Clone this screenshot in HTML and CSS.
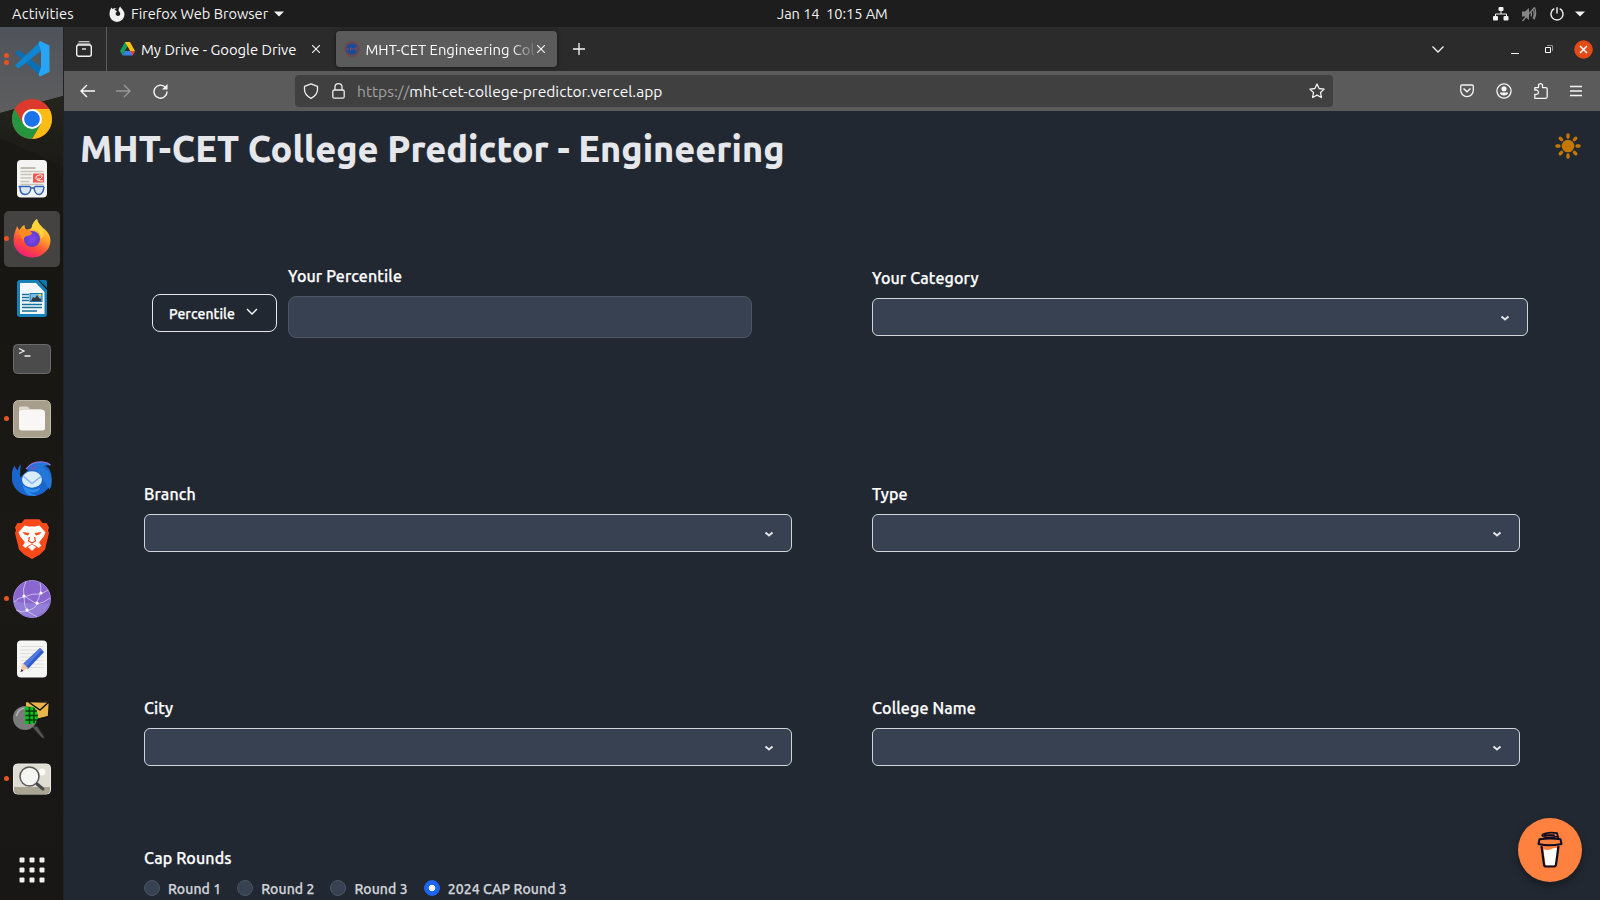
FILE: index.html
```html
<!DOCTYPE html>
<html lang="en">
<head>
<meta charset="utf-8">
<title>MHT-CET Engineering College Predictor</title>
<link rel="stylesheet" href="styles.css">
</head>
<body>
<div class="desktop">
  <header class="topbar">
    <span class="activities">Activities</span>
    <svg class="ff-mono" width="16" height="16" viewBox="0 0 16 16"><path d="M8 2.2C5.500 2.200 5.200 4 6.800 4.600 8.400 5.200 8 6.300 6.700 6.800 6.300 8.600 7.300 9.900 8.900 9.900 10.800 9.900 11.700 8.300 11 6.700 10.700 6 10.200 5.500 9.600 5.200 9.400 3.300 10 1.700 11.200.6 12 2.500 15.500 4.500 15.500 8.600A7.500 7.300 0 0 1 .5 8.600C.5 5.300 1.300 3 2.700 1.500 2.800 2.300 3.200 2.800 3.700 3 4.900 2.300 6.300 1.900 8 2.200Z" fill="#f2f2f2"/></svg>
    <span class="app-name">Firefox Web Browser</span>
    <svg class="caret" width="10" height="6" viewBox="0 0 10 6"><path d="M0 .5h10L5 5.500Z" fill="#f2f2f2"/></svg>
    <span class="clock">Jan 14&nbsp; 10:15 AM</span>
    <div class="tray">
      <svg width="16" height="14" viewBox="0 0 16 14"><g fill="#f2f2f2"><rect x="5.500" y="0" width="5" height="4" rx="1"/><rect x="0" y="9" width="5" height="4.500" rx="1"/><rect x="10.500" y="9" width="5" height="4.500" rx="1"/></g><path d="M8 4v3M2.500 9.500V7h11v2.500" fill="none" stroke="#f2f2f2"/></svg>
      <svg width="16" height="16" viewBox="0 0 16 16"><path d="M1 5.500h3L8 2v12l-4-3.500H1Z" fill="#858585"/><path d="M9.800 5.500q1.500 2.500 0 5M12 4q2.500 4 0 8.500M13.500 1.500q2.500 6-.5 12M1.500 15 13.500 1.500" fill="none" stroke="#858585" stroke-width="1.300"/></svg>
      <svg width="14" height="14" viewBox="0 0 14 14"><path d="M4.300 1.700a6 6 0 1 0 5.400 0M7 .3v6.200" fill="none" stroke="#f2f2f2" stroke-width="1.400"/></svg>
      <svg width="10" height="6" viewBox="0 0 10 6"><path d="M0 .5h10L5 5.500Z" fill="#f2f2f2"/></svg>
    </div>
  </header>
  <div class="workspace">
    <nav class="dock">
      <div class="slot two"><svg viewBox="0 0 40 40"><path d="M3 14 6.500 11 29 28v9.500Z" fill="#0a6fb5"/><path d="M3 26.500 6.500 29.500 29 12V2Z" fill="#0e86d2"/><path d="M28 2 37.500 6.500V33L28 37.500 26.500 36 29 28V12L26.500 4Z" fill="#27a4f2"/></svg></div>
      <div class="slot"><svg viewBox="0 0 40 40"><circle cx="20" cy="20" r="20" fill="#dd3a2e"/><path d="M20 10h17.300A20 20 0 0 1 20 40L28.700 25Z" fill="#fbbc15"/><path d="M2.700 10A20 20 0 0 0 20 40l8.700-15H11.300Z" fill="#25953f"/><circle cx="20" cy="20" r="10" fill="#fff"/><circle cx="20" cy="20" r="7.900" fill="#1a73e8"/></svg></div>
      <div class="slot"><svg viewBox="0 0 40 40"><rect x="5" y="1" width="30" height="37.500" rx="4" fill="#f4f4f3"/><path d="M8.500 9h15" stroke="#b5ad9f" stroke-width="1.600"/><path d="M8.500 12.500h23M8.500 15.500h11M8.500 19h11M8.500 22.500h9M8.500 25.500h23" stroke="#c8c3b8" stroke-width="1.300"/><rect x="21" y="14.500" width="11" height="9" fill="#f4574d"/><path d="M31 22q-6 0-7-2.500t3-3.500 3 2-5 2" fill="none" stroke="#fff"/><path d="M6.500 27.500h11l2 1.500h2l2-1.500h8.500M8 28q0 7.500 5 7.500t6-6.500M22 29q1 6.500 5 6.500t5-7.500" fill="#c8daf0" fill-opacity=".6" stroke="#2c63b2" stroke-width="1.500"/></svg></div>
      <div class="slot active one"><svg viewBox="0 0 40 40"><defs><linearGradient id="fx" x1=".8" y1="0" x2=".3" y2="1"><stop offset="0" stop-color="#fff04a"/><stop offset=".4" stop-color="#ffa32a"/><stop offset=".7" stop-color="#ff4b3c"/><stop offset="1" stop-color="#ec1b7e"/></linearGradient><radialGradient id="fp"><stop offset="0" stop-color="#8148e8"/><stop offset="1" stop-color="#5a3ccf"/></radialGradient></defs><path d="M25 0c1 5 5 7 6 9 3 2 7.500 6 7.500 13A18.500 17 0 0 1 1.500 21C1.500 15 4 11 5 7c1 2 1.500 3 2.500 4 2-3 3.500-4.500 5-5 0 2 1 4 2 5L20 9c0-4 2-7 5-9Z" fill="url(#fx)"/><circle cx="20" cy="20" r="8" fill="url(#fp)"/><path d="M7 11q8-3 13 3 0 2-5 3-4 1-3 5-5-5-5-11Z" fill="#ff8b22"/><path d="M19 11q10-2 10 9 4-4 2-9-5-4-6-11-5 4-6 11Z" fill="#ffd53e"/></svg></div>
      <div class="slot"><svg viewBox="0 0 40 40"><path d="M8 1h18l9 10v24q0 3-3 3H8q-3 0-3-3V4q0-3 3-3Z" fill="#1680b8"/><path d="M27 1h6.500q1.500 0 1.500 1.500V9Z" fill="#0b79b0"/><path d="M8 4h16l8.500 9v22H8Z" fill="#f4f7f9"/><path d="M10 15.500h7M10 18.500h7M10 21.500h7M10 25.500h20M10 28.500h20M10 32h15" stroke="#14709f" stroke-width="1.500"/><rect x="18" y="14.500" width="12" height="8" fill="#78bce2" stroke="#1477aa"/><path d="m19 22 2-4 2 1 2-3 2 3 2 1v2Z" fill="#343a40"/><circle cx="28" cy="16" r="1.200" fill="#ffd51f"/></svg></div>
      <div class="slot"><svg viewBox="0 0 40 40"><rect x="1.500" y="5.500" width="37" height="29" rx="4" fill="#4b4b4b" stroke="#6b6b6b"/><path d="m7 9.500 5 2.500-5 2.500M12.500 17h6" fill="none" stroke="#eee" stroke-width="1.300"/></svg></div>
      <div class="slot one"><svg viewBox="0 0 40 40"><rect x="1.500" y="1.500" width="37" height="37" rx="5" fill="#a79f8c" stroke="#c1baa9"/><path d="M7 9q0-1.500 1.500-1.500h7L18 10h12v6H7Z" fill="#dedad0"/><rect x="7" y="11" width="26" height="20.500" rx="2.500" fill="#f8f7f5"/></svg></div>
      <div class="slot"><svg viewBox="0 -1.500 40 40"><path d="M2.500 5Q-1 10 0 20a20 18.500 0 0 0 39.500 0Q40.500 9 33 5L22 4 8 17Q8 9 9 4 6 6 6 10 3 8 2.500 5Z" fill="#1b66cc"/><path d="M14 9Q20 1 31 1.500q5 .5 7.500 3.500-6-1-8 2 5 1 8 8 3 8-1 14L25 10Z" fill="#2277d8"/><path d="M14 8.500Q20 .5 31 1.500q5 .5 7.500 3" fill="none" stroke="#9a79e8" stroke-width="1.200"/><path d="M17 10q4-5 9-4-3 4-9 4Z" fill="#6a57c8"/><ellipse cx="20" cy="19" rx="10" ry="8.300" fill="#d9ecfb"/><path d="m11.500 16 8.500 7 9-7" fill="none" stroke="#82b7e8" stroke-width="1.400"/><path d="M10.500 24q8 8 18 3-3 7-12 4 3 3 8 4-12 2-14-11Z" fill="#2f8ded"/></svg></div>
      <div class="slot"><svg viewBox="0 0 40 40"><path d="M12.500.3h15l3 3.700h4l2.500 4.500-1 3 1 2.500-4 16.500-5 5-8 4.500-8-4.500-5-5L3 14l1-2.500-1-3L5.500 4h4Z" fill="#fb4a1a"/><path d="m12.500 6.500 4.500 1h6l4.500-1 6 7q-1.500 5-5.500 8.500-2 2 1.500 4.500l-3 2.500q-3-3-6.500-4-3.500 1-6.500 4l-3-2.500q3.500-2.500 1.500-4.500-4-3.500-5.500-8.500Z" fill="#fff"/><path d="m16 28 4-2.500 4 2.500-4 4Z" fill="#fff"/><path d="m10.500 13 7 1-1.500 2.500-3.500-1ZM29.500 13 22.500 14l1.500 2.500 3.500-1Z" fill="#fb4a1a"/><path d="m17.500 18-1 4 3.500 2 3.500-2-1-4" fill="none" stroke="#fb4a1a" stroke-width="1.200"/></svg></div>
      <div class="slot one"><svg viewBox="0 0 40 40"><circle cx="20" cy="20" r="18.500" fill="#8a67cf" stroke="#a186dc"/><path d="M19 38Q1 36 2 21q10 4 18 3 10 2 17 0-3 12-18 14Z" fill="#9c8ddd" opacity=".6"/><path d="M2 23q5-5 10-5 8-4 17-3l7-4M12 17q8 5 13 8M14 2q-4 8-2 16 0 9 3 14M28 4q3 8-4 21M25 25q7-1 13-6M15 32q9-3 10-7M4 31q7 3 11 1l10 6" fill="none" stroke="#d9cef2" stroke-width=".8"/><g fill="#fff"><circle cx="12" cy="17" r="1.600"/><circle cx="29" cy="14" r="1.600"/><circle cx="25" cy="24" r="1.600"/><circle cx="15" cy="31" r="1.600"/></g></svg></div>
      <div class="slot"><svg viewBox="0 0 40 40"><rect x="5" y="1.500" width="30" height="37" rx="4" fill="#f5f5f4"/><path d="M8.500 7.500h23M8.500 11h23M8.500 14.500h23M8.500 18h23M8.500 21.500h23M8.500 25h23M8.500 28.500h23" stroke="#dedede"/><path d="m28 9 4 4-16 17-5-5Z" fill="#2f5bcc"/><path d="m28 9 2 2-16 17-3-3Z" fill="#4f79e0"/><path d="m11 24 5 5-7.500 4Z" fill="#efc59c"/><path d="m8.500 33 1-3 2 2Z" fill="#333"/></svg></div>
      <div class="slot"><svg viewBox="0 0 40 40"><path d="m14 2 23.500.5-1 15L22 20l-8-3Z" fill="#e9b44c"/><path d="m15 2 13 9 9.500-8.500-1 15-11 3M14 2.500l23 .5" fill="none" stroke="#151515" stroke-width="1.500"/><path d="m20 28 10 11h3l-8-12Z" fill="#555" stroke="#292929"/><circle cx="13" cy="19" r="12" fill="#7b7b7b"/><path d="M13 7.500 22 8q4 4 4 11-2 5-5 6l-8 0Z" fill="#07c41c"/><path d="M17.500 8v17M22 9v15M13.500 12H25M13.500 16.500H26M13.500 21H25" stroke="#063b0d" stroke-width="1.600"/><path d="M4.500 17q1.500-7 8-8" stroke="#b5b5b5" stroke-width="1.500" fill="none"/></svg></div>
      <div class="slot one"><svg viewBox="0 0 40 40"><rect x="1.500" y="5" width="37" height="30" rx="4" fill="#dedcd3" stroke="#ebe9e2"/><path d="M2 28h36v3q0 4-4 4H6q-4 0-4-4Z" fill="#aaa493"/><circle cx="30" cy="13" r="3.500" fill="#fafaf7"/><circle cx="17.500" cy="17.500" r="9.500" fill="#f5f5f2" stroke="#56585a" stroke-width="1.500"/><path d="m25 25 6 5" stroke="#46494c" stroke-width="3" stroke-linecap="round"/></svg></div>
      <div class="slot apps"><svg viewBox="0 0 40 40"><g fill="#f1f1f1"><rect x="7.500" y="7.500" width="5" height="5" rx="1"/><rect x="17.500" y="7.500" width="5" height="5" rx="1"/><rect x="27.500" y="7.500" width="5" height="5" rx="1"/><rect x="7.500" y="17.500" width="5" height="5" rx="1"/><rect x="17.500" y="17.500" width="5" height="5" rx="1"/><rect x="27.500" y="17.500" width="5" height="5" rx="1"/><rect x="7.500" y="27.500" width="5" height="5" rx="1"/><rect x="17.500" y="27.500" width="5" height="5" rx="1"/><rect x="27.500" y="27.500" width="5" height="5" rx="1"/></g></svg></div>
    </nav>
    <div class="browser">
      <div class="tabstrip">
        <div class="tabview"><svg width="16" height="16" viewBox="0 0 16 16"><path d="M2.500.7h11M1.500 3h13" fill="none" stroke="#f4f4f4" stroke-width="1.100"/><rect x=".7" y="4" width="14.600" height="11.300" rx="2" fill="none" stroke="#f4f4f4" stroke-width="1.400"/><path d="M6 8h4" stroke="#f4f4f4" stroke-width="1.300"/></svg></div>
        <div class="tab">
          <svg width="15" height="14" viewBox="0 0 15 14"><path d="M5 0h5L5 9l-2.500 4.500L0 9Z" fill="#12a05d"/><path d="M5 0h5l5 9h-5Z" fill="#fcc117"/><path d="M5 9h10l-2.500 4.500h-10Z" fill="#3b7ded"/><path d="M10 9h5l-2.500 4.500Z" fill="#e94235"/><path d="m7.500 4.500 2.500 4.500H5Z" fill="#2b2b2b"/></svg>
          <span class="tab-title">My Drive - Google Drive</span>
          <svg class="x" width="8" height="8" viewBox="0 0 8 8"><path d="m0 0 8 8M8 0 0 8" stroke="#f4f4f4" stroke-width="1.100"/></svg>
        </div>
        <div class="tab current">
          <svg width="16" height="16" viewBox="0 0 16 16"><circle cx="8" cy="8" r="7.200" fill="#4d4d62" stroke="#7b4148" stroke-width="1.200"/><circle cx="8" cy="8" r="5.300" fill="#174b9b"/><path d="M2.500 8h2.500M6.500 6.500v3M7 8h3M10.500 7h3M12 7v3" stroke="#914756" stroke-width="1"/></svg>
          <span class="tab-title clip">MHT-CET Engineering Col</span>
          <svg class="x" width="8" height="8" viewBox="0 0 8 8"><path d="m0 0 8 8M8 0 0 8" stroke="#f4f4f4" stroke-width="1.100"/></svg>
        </div>
        <svg class="plus" width="12" height="12" viewBox="0 0 12 12"><path d="M6 0v12M0 6h12" stroke="#f8f8f8" stroke-width="1.300"/></svg>
        <div class="wincontrols">
          <svg class="alltabs" width="12" height="7" viewBox="0 0 12 7"><path d="m.5.500 5.500 5.500L11.500.5" fill="none" stroke="#f4f4f4" stroke-width="1.300"/></svg>
          <svg class="min" width="8" height="8" viewBox="0 0 8 8"><path d="M0 5.500h8" stroke="#fff"/></svg>
          <svg class="max" width="8" height="8" viewBox="0 0 8 8"><path d="M.5 2.500h5v5h-5Z" fill="none" stroke="#fff"/><path d="M2 .5h5.500V6" fill="none" stroke="#8c8c8c"/></svg>
          <svg width="19" height="19" viewBox="0 0 19 19"><circle cx="9.500" cy="9.500" r="9.300" fill="#e24a17"/><path d="m6 6 7 7M13 6l-7 7" stroke="#fff" stroke-width="1.500"/></svg>
        </div>
      </div>
      <div class="toolbar">
        <svg width="15" height="14" viewBox="0 0 15 14"><path d="M15 7H1M7 1 1 7l6 6" fill="none" stroke="#fafafa" stroke-width="1.400"/></svg>
        <svg class="fwd" width="15" height="14" viewBox="0 0 15 14"><path d="M0 7h14M8 1l6 6-6 6" fill="none" stroke="#989898" stroke-width="1.400"/></svg>
        <svg class="reload" width="15" height="15" viewBox="0 0 15 15"><path d="M12.500 3.500A6.500 6.500 0 1 0 14 7.500" fill="none" stroke="#fafafa" stroke-width="1.400"/><path d="M14.500 0v5.500H9Z" fill="#fafafa"/></svg>
        <div class="urlbar">
          <svg width="16" height="16" viewBox="0 0 16 16"><path d="M8 .8 14.500 3.300v3.500q0 5-6.500 8.600Q1.500 11.800 1.500 6.800V3.300Z" fill="none" stroke="#eee" stroke-width="1.300" stroke-linejoin="round"/></svg>
          <svg class="lock" width="13" height="16" viewBox="0 0 13 16"><rect x=".8" y="7" width="11.400" height="8.200" rx="1.500" fill="none" stroke="#eee" stroke-width="1.300"/><path d="M3 7V4q0-3.300 3.500-3.300T10 4v3" fill="none" stroke="#eee" stroke-width="1.300"/></svg>
          <span class="proto">https://</span><span>mht-cet-college-predictor.vercel.app</span>
          <svg class="star" width="16" height="16" viewBox="0 0 16 16"><path d="m8 1 2.100 4.500 5 .6-3.600 3.400.9 5L8 12.100l-4.400 2.400.9-5L.9 6.100l5-.6Z" fill="none" stroke="#f2f2f2" stroke-width="1.300" stroke-linejoin="round"/></svg>
        </div>
        <div class="tools">
          <svg width="14" height="14" viewBox="0 0 14 14"><path d="M2 1h10q1.300 0 1.300 1.300v4a6.300 6.300 0 0 1-12.600 0v-4Q.7 1 2 1Z" fill="none" stroke="#f5f5f5" stroke-width="1.300"/><path d="m3.500 4.500 3.500 3.300 3.500-3.300" fill="none" stroke="#f5f5f5" stroke-width="1.500"/></svg>
          <svg width="16" height="16" viewBox="0 0 16 16"><circle cx="8" cy="8" r="7.100" fill="none" stroke="#f5f5f5" stroke-width="1.300"/><circle cx="8" cy="5.800" r="2.600" fill="#f5f5f5"/><path d="M3.700 9.500h8.600q-.8 3-4.300 3t-4.300-3Z" fill="#f5f5f5"/></svg>
          <svg width="14" height="16" viewBox="0 0 14 16"><path d="M.8 7V4.600h3.700V2.700q0-2 2-2t2 2v1.900h3.200q1.500 0 1.500 1.500v7.700q0 1.500-1.500 1.500H.8v-4h2q1.700 0 1.700-1.700T2.800 7Z" fill="none" stroke="#f5f5f5" stroke-width="1.300" stroke-linejoin="round"/></svg>
          <svg width="12" height="12" viewBox="0 0 12 12"><path d="M0 1.500h12M0 6h12M0 10.500h12" stroke="#f5f5f5" stroke-width="1.400"/></svg>
        </div>
      </div>
      <main class="page">
        <div class="heading">
          <h1>MHT-CET College Predictor - Engineering</h1>
          <svg class="sun" width="26" height="26" viewBox="0 0 26 26"><circle cx="13" cy="13" r="6.300" fill="#c27803"/><path d="M13 2v2M13 22v2M2 13h2M22 13h2M5.200 5.200l1.400 1.400M19.400 19.400l1.400 1.400M5.200 20.800l1.400-1.400M19.400 6.600l1.400-1.400" stroke="#c27803" stroke-width="3.400" stroke-linecap="round"/></svg>
        </div>
        <form class="fields">
          <div class="score">
            <button type="button" class="unit"><span>Percentile</span><svg width="12" height="7" viewBox="0 0 12 7"><path d="m1 1 5 5 5-5" fill="none" stroke="#fff" stroke-width="1.400"/></svg></button>
            <div class="field grow"><label>Your Percentile</label><div class="input"></div></div>
          </div>
          <div class="field category"><label>Your Category</label><div class="select"><svg width="10" height="7" viewBox="0 0 10 7"><path d="m1.500 1.500 3.500 3 3.500-3" fill="none" stroke="#e5e7eb" stroke-width="1.900"/></svg></div></div>
          <div class="field"><label>Branch</label><div class="select"><svg width="10" height="7" viewBox="0 0 10 7"><path d="m1.500 1.500 3.500 3 3.500-3" fill="none" stroke="#e5e7eb" stroke-width="1.900"/></svg></div></div>
          <div class="field"><label>Type</label><div class="select"><svg width="10" height="7" viewBox="0 0 10 7"><path d="m1.500 1.500 3.500 3 3.500-3" fill="none" stroke="#e5e7eb" stroke-width="1.900"/></svg></div></div>
          <div class="field"><label>City</label><div class="select"><svg width="10" height="7" viewBox="0 0 10 7"><path d="m1.500 1.500 3.500 3 3.500-3" fill="none" stroke="#e5e7eb" stroke-width="1.900"/></svg></div></div>
          <div class="field"><label>College Name</label><div class="select"><svg width="10" height="7" viewBox="0 0 10 7"><path d="m1.500 1.500 3.500 3 3.500-3" fill="none" stroke="#e5e7eb" stroke-width="1.900"/></svg></div></div>
          <div class="field rounds"><label>Cap Rounds</label>
            <div class="radios">
              <span class="opt"><i class="radio"></i><span>Round 1</span></span>
              <span class="opt"><i class="radio"></i><span>Round 2</span></span>
              <span class="opt"><i class="radio"></i><span>Round 3</span></span>
              <span class="opt"><i class="radio on"></i><span>2024 CAP Round 3</span></span>
            </div>
          </div>
        </form>
      </main>
    </div>
  </div>
  <div class="coffee"><svg width="26" height="38" viewBox="0 0 26 38"><path d="M4.500 15.500 7.500 35h11l3-19.500Z" fill="#ff813f"/><path d="M6.500 18.500q5 1 8-.5t6.500-.5L19 34.500H8.500Z" fill="#fff"/><path d="M4.500 15 7 33.500q.3 2 2 2h8q1.800 0 2-2L21.500 15" fill="none" stroke="#0d0c22" stroke-width="2.200"/><path d="M2.500 8.300q10.500-1.600 21 0l1 4.700q-12 2.500-23 0Z" fill="#ff813f" stroke="#0d0c22" stroke-width="2" stroke-linejoin="round"/><path d="M20 5.500q-6 1.500-12.500.3-5-1.700.5-3.300 6-1.500 12-.3l1.500 5.500M8 4.200h9" fill="none" stroke="#0d0c22" stroke-width="1.800" stroke-linecap="round"/></svg></div>
</div>
</body>
</html>
```
FILE: styles.css
```css
* { box-sizing: border-box; }
body { margin: 0; background: #222831; font-family: Ubuntu, "Noto Sans", sans-serif; color: #fff; }
svg { display: block; flex: none; }
.desktop { width: 1600px; height: 900px; overflow: hidden; display: flex; flex-direction: column; position: relative; white-space: nowrap; }

.topbar { height: 27px; flex: none; background: #1d1d1d; display: flex; align-items: center; padding: 0 15px 0 12px; font-size: 14.6px; color: #f2f2f2; position: relative; }
.activities { width: 62px; letter-spacing: .2px; }
.ff-mono { margin-left: 35px; }
.app-name { margin-left: 6px; }
.caret { margin-left: 6px; margin-top: 1px; }
.clock { position: absolute; left: 777px; letter-spacing: -.05px; }
.tray { margin-left: auto; display: flex; align-items: center; gap: 13px; }
.tray svg:first-child { margin-right: -1px; }
.tray svg:last-child { margin-left: -2px; }

.workspace { flex: 1; display: flex; min-height: 0; }
.dock { width: 64px; flex: none; background: linear-gradient(#1b1a17, #171613 30%, #1b1915 60%, #181716); border-right: 1px solid #202225; padding-top: 2px; display: flex; flex-direction: column; position: relative; }
.dock::before { content: ""; position: absolute; inset: 0 0 auto; height: 86px; background: linear-gradient(#4f535a, #5e5e5f); clip-path: polygon(0 0, 100% 0, 100% 69px, 0 86px); }
.dock::after { content: ""; position: absolute; left: 0; right: 0; top: 69px; height: 70px; background: linear-gradient(#24251d, #1b1a17); clip-path: polygon(0 17px, 100% 0, 100% 100%, 0 60%); }
.slot { height: 60px; flex: none; display: flex; align-items: center; justify-content: center; position: relative; z-index: 1; }
.slot svg { width: 40px; height: 40px; }
.slot.active::before { content: ""; position: absolute; inset: 2px 3px 2px 4px; background: #444342; border-radius: 5px; }
.slot.active svg { position: relative; }
.slot.one::after, .slot.two::after { content: ""; position: absolute; left: 4px; top: 27px; width: 5px; height: 5px; border-radius: 50%; background: #e95420; }
.slot.two::after { top: 24px; box-shadow: 0 7px #e95420; }
.slot.apps { margin-top: 31px; }

.browser { flex: 1; min-width: 0; display: flex; flex-direction: column; }
.tabstrip { height: 44px; flex: none; background: #2b2b2b; display: flex; align-items: center; font-size: 14.8px; color: #fbfbfe; }
.tabview { width: 43px; height: 44px; border-right: 1px solid #5b5b5b; display: flex; align-items: center; padding-left: 12px; }
.tab { display: flex; align-items: center; height: 36px; padding-left: 13px; width: 229px; }
.tab-title { margin-left: 6px; padding-top: 1px; }
.tab .x { margin-left: auto; margin-right: 16px; }
.tab.current { width: 221px; background: #5b5b5b; border-radius: 4px; padding-left: 8px; box-shadow: 0 0 4px #0008; }
.tab.current .x { margin-right: 12px; }
.clip { margin-left: 5.5px; width: 168px; overflow: hidden; mask-image: linear-gradient(90deg, #000 145px, transparent 172px); }
.plus { margin-left: 16px; }
.wincontrols { margin-left: auto; margin-right: 7px; display: flex; align-items: center; }
.min { margin: 6px 0 0 67px; }
.max { margin: 0 21px 0 26px; }

.toolbar { height: 40px; flex: none; background: #5b5b5b; display: flex; align-items: center; padding: 0 18px 0 16px; }
.fwd { margin-left: 21px; }
.reload { margin-left: 22px; }
.urlbar { margin-left: 127px; width: 1038px; height: 32px; background: #404040; border-radius: 4px; display: flex; align-items: center; padding: 0 8px; font-size: 15.55px; color: #fbfbfe; }
.lock { margin: 0 12px 0 13px; }
.proto { color: #a0a0a2; }
.star { margin-left: auto; }
.tools { margin-left: auto; display: flex; align-items: center; gap: 22px; }

.page { flex: 1; min-height: 0; background: #222831; overflow: hidden; }
.heading { display: flex; height: 153px; justify-content: space-between; padding: 16px 19px 0 16px; }
h1 { margin: 0; font-size: 36px; line-height: 44px; font-weight: 800; color: #e5e7eb; }
.sun { margin-top: 6px; }
.fields { display: grid; grid-template-columns: 648px 648px; column-gap: 80px; grid-template-rows: 218px 214px 150px 60px; padding-left: 80px; }
label { display: block; height: 24px; line-height: 24px; font-size: 16px; font-weight: 500; margin-bottom: 8px; letter-spacing: .13px; -webkit-text-stroke: .25px; }
.score { display: flex; padding: 0 40px 0 8px; gap: 11px; }
.unit { width: 125px; height: 38px; margin: 30px 0 0; border: 1px solid #e5e7eb; border-radius: 8px; background: none; color: #fff; font: 500 14px Ubuntu, "Noto Sans", sans-serif; letter-spacing: .08px; -webkit-text-stroke: .25px; display: flex; align-items: center; padding: 2px 0 0 16px; }
.unit svg { margin: -6px 0 0 11px; }
.grow { flex: 1; }
.input { height: 42px; background: #374151; border: 1px solid #4b5563; border-radius: 8px; }
.category { padding-top: 2px; margin-right: -8px; }
.select { height: 38px; border: 1px solid #d1d5db; border-radius: 6px; background: #374151; display: flex; align-items: center; justify-content: flex-end; padding: 2px 17px 0 0; }
.rounds label { margin-bottom: 6px; }
.radios { display: flex; gap: 16px; font-size: 14px; font-weight: 500; letter-spacing: .08px; -webkit-text-stroke: .25px; color: #d1d5db; }
.opt { display: flex; align-items: center; height: 24px; gap: 8px; }
.opt span { padding-top: 2px; }
.radio { width: 16px; height: 16px; border-radius: 50%; background: #374151; border: 1px solid #4b5563; }
.radio.on { background: radial-gradient(circle, #fff 3px, #1c64f2 3.6px); border-color: #1c64f2; }
.coffee { position: absolute; left: 1518px; top: 818px; width: 64px; height: 64px; border-radius: 50%; background: #ff813f; box-shadow: 0 4px 8px #0005; display: flex; align-items: center; justify-content: center; }
```
